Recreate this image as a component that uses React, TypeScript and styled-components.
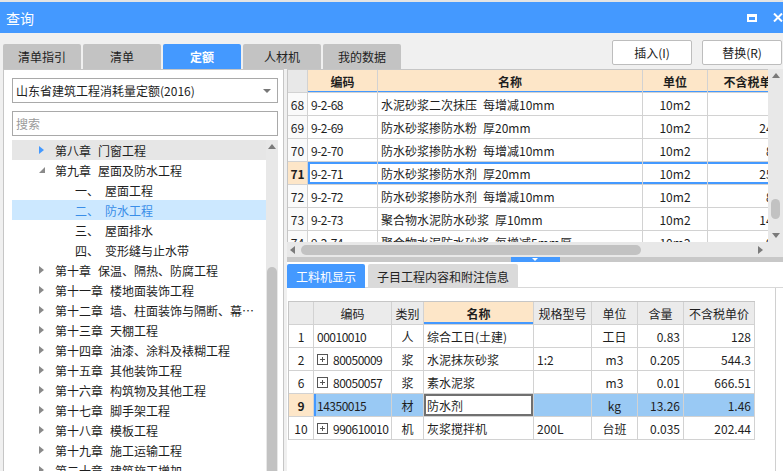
import React from 'react';
import styled, { createGlobalStyle } from 'styled-components';

const BLUE = '#4499ff';
const PEACH = '#fde6c8';
const GRID = '#d2d2d2';
const EN = '\u2002';

const GlobalStyle = createGlobalStyle`
  * { box-sizing: border-box; }
  html, body { margin: 0; padding: 0; background: #f0f0f0; }
  body {
    font-family: "Noto Sans CJK SC", "Noto Sans", "Liberation Sans", sans-serif;
    font-size: 12px;
    color: #1e1e1e;
  }
`;

const Window = styled.div`
  width: 783px;
  height: 471px;
  overflow: hidden;
  display: flex;
  flex-direction: column;
  background: #f0f0f0;
`;

const TopStrip = styled.div`
  flex: none;
  height: 2px;
  background: #e4e4e4;
`;

const TitleBar = styled.div`
  flex: none;
  height: 31px;
  display: flex;
  align-items: center;
  padding-left: 6px;
  background: ${BLUE};
  color: #fff;
`;

const Title = styled.div`
  flex: 1;
  font-size: 14px;
  line-height: 1;
`;

const MaxIcon = styled.div`
  width: 10px;
  height: 8px;
  border: 2px solid #fff;
  border-top-width: 3px;
`;

const CloseIcon = styled.svg`
  width: 10px;
  height: 9px;
  margin-left: 16px;
  stroke: #fff;
  stroke-width: 2;
  fill: none;
`;

const Toolbar = styled.div`
  flex: none;
  height: 36px;
  display: flex;
  justify-content: space-between;
  padding: 0 1px 0 3px;
`;

const TabStrip = styled.div`
  display: flex;
  gap: 2px;
  align-self: flex-end;
`;

const MainTab = styled.div<{ $active?: boolean }>`
  width: 78px;
  height: 25px;
  display: flex;
  align-items: center;
  justify-content: center;
  border-radius: 2px 2px 0 0;
  background: ${(p) => (p.$active ? BLUE : '#c3c3c3')};
  color: ${(p) => (p.$active ? '#fff' : '#222')};
  font-weight: ${(p) => (p.$active ? 700 : 400)};
`;

const Actions = styled.div`
  display: flex;
  gap: 10px;
  padding-top: 7px;
`;

const ActionButton = styled.button`
  width: 80px;
  height: 25px;
  padding: 0;
  background: #fff;
  border: 1px solid #bdbdbd;
  border-radius: 2px;
  font: inherit;
  color: #222;
`;

const Main = styled.div`
  flex: 1;
  min-height: 0;
  display: flex;
  gap: 3px;
  padding-left: 3px;
`;

const LeftPanel = styled.div`
  width: 281px;
  flex: none;
  display: flex;
  flex-direction: column;
  padding: 8px 5px 0 8px;
  background: #fff;
  border: 1px solid #c6c6c6;
  border-bottom: none;
`;

const Select = styled.div`
  height: 25px;
  display: flex;
  align-items: center;
  justify-content: space-between;
  padding: 0 6px 0 3px;
  border: 1px solid #a9a9a9;
  color: #1e1e1e;
`;

const DropCaret = styled.span`
  width: 0;
  height: 0;
  border-left: 4px solid transparent;
  border-right: 4px solid transparent;
  border-top: 4px solid #777;
`;

const Search = styled.input`
  height: 25px;
  margin-top: 8px;
  padding: 0 3px;
  border: 1px solid #a9a9a9;
  font: inherit;
  outline: none;
  &::placeholder { color: #9a9a9a; }
`;

const Tree = styled.div`
  flex: 1;
  min-height: 0;
  display: flex;
  margin-top: 4px;
`;

const TreeList = styled.div`
  flex: 1;
  overflow: hidden;
`;

const TreeRow = styled.div<{ $state?: 'hover' | 'selected' }>`
  height: 20px;
  display: flex;
  align-items: center;
  padding-left: 27px;
  white-space: nowrap;
  background: ${(p) => (p.$state === 'hover' ? '#e6e6e6' : p.$state === 'selected' ? '#cce8ff' : 'transparent')};
  color: ${(p) => (p.$state === 'selected' ? '#3a8ee8' : '#1e1e1e')};
`;

const Caret = styled.span`
  width: 16px;
  flex: none;
  display: flex;
  align-items: center;
`;

const ChapterName = styled.span`
  margin-left: 7px;
`;

const SectionNo = styled.span`
  width: 30px;
  flex: none;
  margin-left: 20px;
`;

const ScrollTrack = styled.div<{ $w: number }>`
  width: ${(p) => p.$w}px;
  flex: none;
  display: flex;
  flex-direction: column;
  align-items: center;
  background: #e8e8e8;
  overflow: hidden;
`;

const Thumb = styled.div<{ $top: number; $h: number; $w: number }>`
  flex: none;
  margin-top: ${(p) => p.$top}px;
  width: ${(p) => p.$w}px;
  height: ${(p) => p.$h}px;
  border-radius: 5px;
  background: #c2c2c2;
`;

const Tri = styled.svg<{ $top?: number }>`
  flex: none;
  margin-top: ${(p) => p.$top ?? 0}px;
  fill: #7a7a7a;
`;

const RightPanel = styled.div`
  flex: 1;
  min-width: 0;
  display: flex;
  flex-direction: column;
`;

const GridPane = styled.div`
  flex: none;
  height: 173px;
  display: flex;
  background: #fff;
`;

const TableWrap = styled.div`
  width: 481px;
  flex: none;
  overflow: hidden;
  border-left: 1px solid #c6c6c6;
  border-top: 1px solid #c6c6c6;
`;

const GridRow = styled.div`
  display: flex;
  height: 23px;
`;

type Align = 'left' | 'center' | 'right';
const justify = (a?: Align) => (a === 'center' ? 'center' : a === 'right' ? 'flex-end' : 'flex-start');

const Cell = styled.div<{
  $w: number;
  $align?: Align;
  $bg?: string;
  $bold?: boolean;
  $ring?: string;
  $pad?: number;
}>`
  flex: none;
  width: ${(p) => p.$w}px;
  display: flex;
  align-items: center;
  justify-content: ${(p) => justify(p.$align)};
  padding: 0 ${(p) => p.$pad ?? 3}px;
  border-right: 1px solid ${GRID};
  border-bottom: 1px solid ${GRID};
  background: ${(p) => p.$bg ?? 'transparent'};
  font-weight: ${(p) => (p.$bold ? 700 : 400)};
  box-shadow: ${(p) => p.$ring ?? 'none'};
  white-space: nowrap;
  overflow: hidden;
`;

const Code = styled.span`
  letter-spacing: -0.5px;
`;

const HScrollRow = styled.div`
  flex: none;
  height: 15px;
  display: flex;
  background: #e8e8e8;
`;

const HTrack = styled.div`
  width: 481px;
  flex: none;
  display: flex;
  align-items: center;
  padding: 0 5px 0 3px;
`;

const HThumb = styled.div`
  width: 340px;
  height: 10px;
  margin-left: 6px;
  margin-right: auto;
  border-radius: 5px;
  background: #c2c2c2;
`;

const Splitter = styled.div`
  flex: none;
  height: 5px;
  display: flex;
  justify-content: center;
  background: #c8c8c8;
`;

const SplitHandle = styled.div`
  width: 49px;
  display: flex;
  justify-content: center;
  padding-top: 1px;
  background: ${BLUE};
`;

const BottomPane = styled.div`
  flex: 1;
  min-height: 0;
  display: flex;
  flex-direction: column;
  background: #fff;
`;

const SubTabs = styled.div`
  flex: none;
  height: 26px;
  display: flex;
  gap: 3px;
  padding-top: 2px;
  border-bottom: 1px solid #d8d8d8;
`;

const SubTab = styled.div<{ $active?: boolean }>`
  height: 24px;
  display: flex;
  align-items: center;
  padding: 0 9px;
  border-radius: 2px 2px 0 0;
  background: ${(p) => (p.$active ? BLUE : '#dadada')};
  color: ${(p) => (p.$active ? '#fff' : '#222')};
`;

const BottomBody = styled.div`
  flex: 1;
  width: 489px;
  padding: 13px 0 0 1px;
  border-right: 1px solid #d0d0d0;
`;

const BTable = styled.div`
  width: fit-content;
  border-left: 1px solid #c6c6c6;
  border-top: 1px solid #c6c6c6;
`;

const PlusSvg = styled.svg`
  width: 11px;
  height: 11px;
  flex: none;
  margin-right: 5px;
  fill: #fff;
  stroke: #555;
  shape-rendering: crispEdges;
`;

const PlusBox = () => (
  <PlusSvg viewBox="0 0 11 11">
    <rect x="0.5" y="0.5" width="10" height="10" />
    <path d="M3 5.5h5M5.5 3v5" />
  </PlusSvg>
);

const RightTri = ({ color = '#8a8a8a' }: { color?: string }) => (
  <svg width="5" height="8" viewBox="0 0 5 8">
    <path d="M0 0L5 4L0 8Z" fill={color} />
  </svg>
);

const OpenTri = () => (
  <svg width="6" height="6" viewBox="0 0 6 6">
    <path d="M6 0L6 6L0 6Z" fill="#8a8a8a" />
  </svg>
);

type TreeItem = { kind: 'chapter' | 'section'; no: string; name: string; state?: 'hover' | 'selected'; open?: boolean };

const tree: TreeItem[] = [
  { kind: 'chapter', no: '第八章', name: '门窗工程', state: 'hover' },
  { kind: 'chapter', no: '第九章', name: '屋面及防水工程', open: true },
  { kind: 'section', no: '一、', name: '屋面工程' },
  { kind: 'section', no: '二、', name: '防水工程', state: 'selected' },
  { kind: 'section', no: '三、', name: '屋面排水' },
  { kind: 'section', no: '四、', name: '变形缝与止水带' },
  { kind: 'chapter', no: '第十章', name: '保温、隔热、防腐工程' },
  { kind: 'chapter', no: '第十一章', name: '楼地面装饰工程' },
  { kind: 'chapter', no: '第十二章', name: '墙、柱面装饰与隔断、幕…' },
  { kind: 'chapter', no: '第十三章', name: '天棚工程' },
  { kind: 'chapter', no: '第十四章', name: '油漆、涂料及裱糊工程' },
  { kind: 'chapter', no: '第十五章', name: '其他装饰工程' },
  { kind: 'chapter', no: '第十六章', name: '构筑物及其他工程' },
  { kind: 'chapter', no: '第十七章', name: '脚手架工程' },
  { kind: 'chapter', no: '第十八章', name: '模板工程' },
  { kind: 'chapter', no: '第十九章', name: '施工运输工程' },
  { kind: 'chapter', no: '第二十章', name: '建筑施工增加' },
];

const quotaCols = [20, 70, 265, 65, 92];

const quotaRows = [
  { n: '68', code: '9-2-68', name: `水泥砂浆二次抹压${EN}每增减10mm`, unit: '10m2', price: '' },
  { n: '69', code: '9-2-69', name: `防水砂浆掺防水粉${EN}厚20mm`, unit: '10m2', price: '248.35' },
  { n: '70', code: '9-2-70', name: `防水砂浆掺防水粉${EN}每增减10mm`, unit: '10m2', price: '81.02' },
  { n: '71', code: '9-2-71', name: `防水砂浆掺防水剂${EN}厚20mm`, unit: '10m2', price: '254.66', sel: true },
  { n: '72', code: '9-2-72', name: `防水砂浆掺防水剂${EN}每增减10mm`, unit: '10m2', price: '83.15' },
  { n: '73', code: '9-2-73', name: `聚合物水泥防水砂浆${EN}厚10mm`, unit: '10m2', price: '146.72' },
  { n: '74', code: '9-2-74', name: `聚合物水泥防水砂浆${EN}每增减5mm厚`, unit: '10m2', price: '92.40' },
];

const matCols = [25, 78, 32, 110, 58, 46, 46, 71];
const matHead = ['', '编码', '类别', '名称', '规格型号', '单位', '含量', '不含税单价'];

const matRows = [
  { n: '1', code: '00010010', plus: false, type: '人', name: '综合工日(土建)', spec: '', unit: '工日', qty: '0.83', price: '128' },
  { n: '2', code: '80050009', plus: true, type: '浆', name: '水泥抹灰砂浆', spec: '1:2', unit: 'm3', qty: '0.205', price: '544.3' },
  { n: '6', code: '80050057', plus: true, type: '浆', name: '素水泥浆', spec: '', unit: 'm3', qty: '0.01', price: '666.51' },
  { n: '9', code: '14350015', plus: false, type: '材', name: '防水剂', spec: '', unit: 'kg', qty: '13.26', price: '1.46', sel: true },
  { n: '10', code: '990610010', plus: true, type: '机', name: '灰浆搅拌机', spec: '200L', unit: '台班', qty: '0.035', price: '202.44' },
];

const mainTabs = ['清单指引', '清单', '定额', '人材机', '我的数据'];

const SEL_BLUE = '#99c9f4';
const rowRing = `inset 0 2px 0 ${BLUE}, inset 0 -2px 0 ${BLUE}`;

export default function App() {
  return (
    <>
      <GlobalStyle />
      <Window>
        <TopStrip />
        <TitleBar>
          <Title>查询</Title>
          <MaxIcon />
          <CloseIcon viewBox="0 0 10 9">
            <path d="M1 0.5L9 8.5M9 0.5L1 8.5" />
          </CloseIcon>
        </TitleBar>

        <Toolbar>
          <TabStrip>
            {mainTabs.map((t) => (
              <MainTab key={t} $active={t === '定额'}>
                {t}
              </MainTab>
            ))}
          </TabStrip>
          <Actions>
            <ActionButton>插入(I)</ActionButton>
            <ActionButton>替换(R)</ActionButton>
          </Actions>
        </Toolbar>

        <Main>
          <LeftPanel>
            <Select>
              <span>山东省建筑工程消耗量定额(2016)</span>
              <DropCaret />
            </Select>
            <Search placeholder="搜索" />
            <Tree>
              <TreeList>
                {tree.map((item) => (
                  <TreeRow key={item.no + item.name} $state={item.state}>
                    <Caret>
                      {item.kind === 'chapter' &&
                        (item.open ? <OpenTri /> : <RightTri color={item.state === 'hover' ? BLUE : '#8a8a8a'} />)}
                    </Caret>
                    {item.kind === 'chapter' ? (
                      <>
                        <span>{item.no}</span>
                        <ChapterName>{item.name}</ChapterName>
                      </>
                    ) : (
                      <>
                        <SectionNo>{item.no}</SectionNo>
                        <span>{item.name}</span>
                      </>
                    )}
                  </TreeRow>
                ))}
              </TreeList>
              <ScrollTrack $w={12}>
                <Tri $top={4} width="8" height="5" viewBox="0 0 8 5">
                  <path d="M0 5L4 0L8 5Z" />
                </Tri>
                <Thumb $top={118} $h={230} $w={10} />
              </ScrollTrack>
            </Tree>
          </LeftPanel>

          <RightPanel>
            <GridPane>
              <TableWrap>
                <GridRow>
                  <Cell $w={quotaCols[0]} $bg="#e8e8e8" />
                  {['编码', '名称', '单位', '不含税单价'].map((h, i) => (
                    <Cell
                      key={h}
                      $w={quotaCols[i + 1]}
                      $align="center"
                      $bg={PEACH}
                      $bold
                      $ring={`inset 0 -1px 0 ${BLUE}`}
                    >
                      {h}
                    </Cell>
                  ))}
                </GridRow>
                {quotaRows.map((r) => (
                  <GridRow key={r.n}>
                    <Cell $w={quotaCols[0]} $align="center" $pad={0} $bg={r.sel ? PEACH : '#fafafa'} $bold={r.sel}>
                      {r.n}
                    </Cell>
                    <Cell $w={quotaCols[1]} $ring={r.sel ? `${rowRing}, inset 2px 0 0 ${BLUE}` : undefined}>
                      <Code>{r.code}</Code>
                    </Cell>
                    <Cell $w={quotaCols[2]} $ring={r.sel ? rowRing : undefined}>
                      {r.name}
                    </Cell>
                    <Cell $w={quotaCols[3]} $align="center" $ring={r.sel ? rowRing : undefined}>
                      {r.unit}
                    </Cell>
                    <Cell $w={quotaCols[4]} $align="right" $ring={r.sel ? rowRing : undefined}>
                      {r.price}
                    </Cell>
                  </GridRow>
                ))}
              </TableWrap>
              <ScrollTrack $w={15}>
                <Tri $top={4} width="8" height="5" viewBox="0 0 8 5">
                  <path d="M0 5L4 0L8 5Z" />
                </Tri>
                <Thumb $top={121} $h={20} $w={9} />
                <Tri $top={14} width="8" height="5" viewBox="0 0 8 5">
                  <path d="M0 0L8 0L4 5Z" />
                </Tri>
              </ScrollTrack>
            </GridPane>
            <HScrollRow>
              <HTrack>
                <Tri width="5" height="8" viewBox="0 0 5 8">
                  <path d="M5 0L0 4L5 8Z" />
                </Tri>
                <HThumb />
                <Tri width="5" height="8" viewBox="0 0 5 8">
                  <path d="M0 0L5 4L0 8Z" />
                </Tri>
              </HTrack>
            </HScrollRow>
            <Splitter>
              <SplitHandle>
                <svg width="6" height="3" viewBox="0 0 6 3">
                  <path d="M0 0L6 0L3 3Z" fill="#fff" />
                </svg>
              </SplitHandle>
            </Splitter>

            <BottomPane>
              <SubTabs>
                <SubTab $active>工料机显示</SubTab>
                <SubTab>子目工程内容和附注信息</SubTab>
              </SubTabs>
              <BottomBody>
                <BTable>
                  <GridRow>
                    {matHead.map((h, i) => (
                      <Cell
                        key={i}
                        $w={matCols[i]}
                        $align="center"
                        $bg={h === '名称' ? PEACH : '#ebebeb'}
                        $bold={h === '名称'}
                        $ring={h === '名称' ? `inset 0 -2px 0 ${BLUE}` : undefined}
                      >
                        {h}
                      </Cell>
                    ))}
                  </GridRow>
                  {matRows.map((r) => {
                    const bg = r.sel ? SEL_BLUE : undefined;
                    return (
                      <GridRow key={r.n}>
                        <Cell $w={matCols[0]} $align="center" $pad={0} $bg={r.sel ? PEACH : undefined} $bold={r.sel}>
                          {r.n}
                        </Cell>
                        <Cell $w={matCols[1]} $bg={bg} $ring={r.sel ? `inset 2px 0 0 ${BLUE}` : undefined}>
                          {r.plus && <PlusBox />}
                          <Code>{r.code}</Code>
                        </Cell>
                        <Cell $w={matCols[2]} $align="center" $bg={bg}>
                          {r.type}
                        </Cell>
                        <Cell $w={matCols[3]} $bg={r.sel ? '#fff' : undefined} $ring={r.sel ? 'inset 0 0 0 2px #707070' : undefined}>
                          {r.name}
                        </Cell>
                        <Cell $w={matCols[4]} $bg={bg}>
                          {r.spec}
                        </Cell>
                        <Cell $w={matCols[5]} $align="center" $bg={bg}>
                          {r.unit}
                        </Cell>
                        <Cell $w={matCols[6]} $align="right" $bg={bg}>
                          {r.qty}
                        </Cell>
                        <Cell $w={matCols[7]} $align="right" $bg={bg}>
                          {r.price}
                        </Cell>
                      </GridRow>
                    );
                  })}
                </BTable>
              </BottomBody>
            </BottomPane>
          </RightPanel>
        </Main>
      </Window>
    </>
  );
}
